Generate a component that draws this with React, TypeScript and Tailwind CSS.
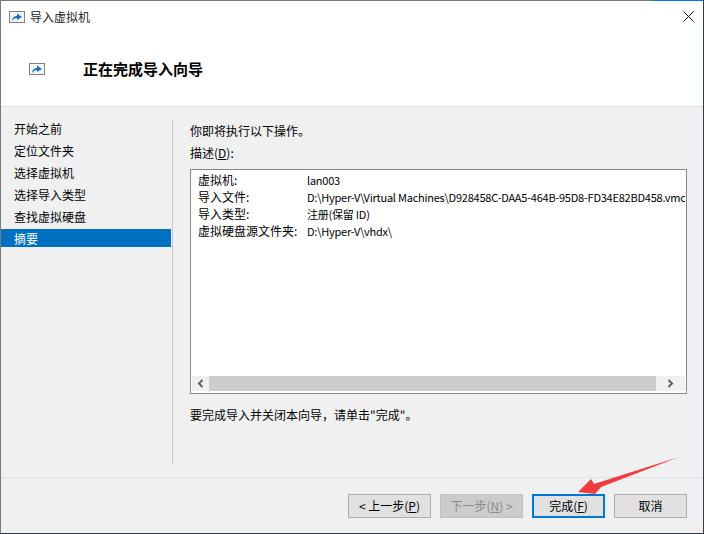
import React from 'react';

const steps = ['开始之前', '定位文件夹', '选择虚拟机', '选择导入类型', '查找虚拟硬盘', '摘要'];

const rows = [
  ['虚拟机:', 'lan003'],
  ['导入文件:', 'D:\\Hyper-V\\Virtual Machines\\D928458C-DAA5-464B-95D8-FD34E82BD458.vmc'],
  ['导入类型:', '注册(保留 ID)'],
  ['虚拟硬盘源文件夹:', 'D:\\Hyper-V\\vhdx\\'],
];

const WizardIcon = () => (
  <svg width="16" height="12" viewBox="0 0 16 12" className="block shrink-0">
    <rect x="0.5" y="0.5" width="15" height="11" fill="#f1f5fa" stroke="#808080" />
    <path d="M3 10 C3.2 7 5.5 5 8 5 L8 2.5 L13 6 L8 9 L8 7 C6 7 4.5 8 3 10 Z" fill="#1f6fc4" />
  </svg>
);

const WizardButton = ({ children, className }: { children: React.ReactNode; className: string }) => (
  <button className={`flex h-[24px] items-center justify-center ${className}`}>{children}</button>
);

export default function App() {
  return (
    <div className="relative flex h-[534px] w-[704px] flex-col overflow-hidden border-b border-l border-r border-b-[#2b3a44] border-l-[#7a7a7a] border-r-[#24404f] bg-[#f0f0f0] text-[12px] leading-[16px] text-black [font-family:'Noto_Sans_CJK_SC','Liberation_Sans',sans-serif]">
      {/* header */}
      <div className="h-[107px] shrink-0 border-b border-[#dfdfdf] bg-white">
        <div className="flex h-[1px]">
          <div className="flex-1 bg-[#7a7a7a]" />
          <div className="w-[50px] bg-[#0078d7]" />
        </div>
        <div className="flex h-[31px] items-center pl-[8px]">
          <WizardIcon />
          <span className="ml-[5px] text-[#222]">导入虚拟机</span>
          <svg width="11" height="11" viewBox="0 0 11 11" className="ml-auto mr-[9px]">
            <path d="M0.5 0.5 L10.5 10.5 M10.5 0.5 L0.5 10.5" stroke="#111" strokeWidth="1" fill="none" />
          </svg>
        </div>
        <div className="flex h-[74px] items-center pl-[28px]">
          <WizardIcon />
          <h1 className="ml-[38px] text-[15px] font-bold">正在完成导入向导</h1>
        </div>
      </div>

      {/* body */}
      <div className="flex h-[371px] shrink-0 border-b border-[#dfdfdf]">
        <nav className="mt-[12px] mb-[12px] w-[172px] shrink-0 border-r border-[#c8c8c8]">
          {steps.map((step, i) => (
            <div
              key={step}
              className={
                i === 5
                  ? 'mr-[1px] flex h-[18px] items-center bg-[#0070c0] pl-[13px] pt-[2px] text-white'
                  : 'mb-[4px] flex h-[18px] items-center pl-[13px] pt-[2px]'
              }
            >
              {step}
            </div>
          ))}
        </nav>
        <main className="flex min-w-0 flex-1 flex-col pl-[17px] pr-[16px] pt-[16px]">
          <p className="h-[16px]">你即将执行以下操作。</p>
          <label className="mt-[6px] h-[16px]">
            描述(<span className="underline">D</span>):
          </label>
          <div className="mt-[8px] flex h-[225px] flex-col border border-[#828790] bg-white pb-[2px] pl-[1px] pr-[1px] pt-[1px]">
            <div className="min-h-0 flex-1 overflow-hidden pl-[6px]">
              {rows.map(([name, value]) => (
                <div key={name} className="flex h-[17px] items-center whitespace-nowrap">
                  <span className="w-[109px] shrink-0">{name}</span>
                  <span className="text-[11px] tracking-[-0.23px]">{value}</span>
                </div>
              ))}
            </div>
            <div className="flex h-[15px] shrink-0 items-center bg-[#f0f0f0]">
              <span className="flex h-full w-[17px] items-center justify-center">
                <svg width="7" height="9" viewBox="0 0 7 9">
                  <path d="M5.5 1 L2 4.5 L5.5 8" stroke="#606060" strokeWidth="2" fill="none" />
                </svg>
              </span>
              <div className="h-full flex-1 bg-[#cdcdcd]" />
              <span className="flex h-full w-[29px] items-center justify-center">
                <svg width="7" height="9" viewBox="0 0 7 9">
                  <path d="M1.5 1 L5 4.5 L1.5 8" stroke="#606060" strokeWidth="2" fill="none" />
                </svg>
              </span>
            </div>
          </div>
          <p className="mt-[13px] h-[16px]">要完成导入并关闭本向导，请单击"完成"。</p>
        </main>
      </div>

      {/* footer */}
      <div className="flex flex-1 items-start justify-end gap-[9px] pr-[16px] pt-[16px]">
        <WizardButton className="w-[83px] border border-[#adadad] bg-[#e1e1e1]">
          &lt; 上一步(<span className="underline">P</span>)
        </WizardButton>
        <WizardButton className="w-[83px] border border-[#bfbfbf] bg-[#cccccc] text-[#8a8a8a]">
          下一步(<span className="underline">N</span>) &gt;
        </WizardButton>
        <WizardButton className="w-[73px] border-2 border-[#0078d7] bg-[#e1e1e1]">
          完成(<span className="underline">F</span>)
        </WizardButton>
        <WizardButton className="w-[73px] border border-[#adadad] bg-[#e1e1e1]">取消</WizardButton>
      </div>

      {/* red annotation arrow on top of the screenshot */}
      <svg width="704" height="534" viewBox="0 0 704 534" className="pointer-events-none absolute left-[-1px] top-0">
        <polygon points="578,492 591,479 594,484 679,457 601,487 595,494" fill="#f23a3f" />
      </svg>
    </div>
  );
}
